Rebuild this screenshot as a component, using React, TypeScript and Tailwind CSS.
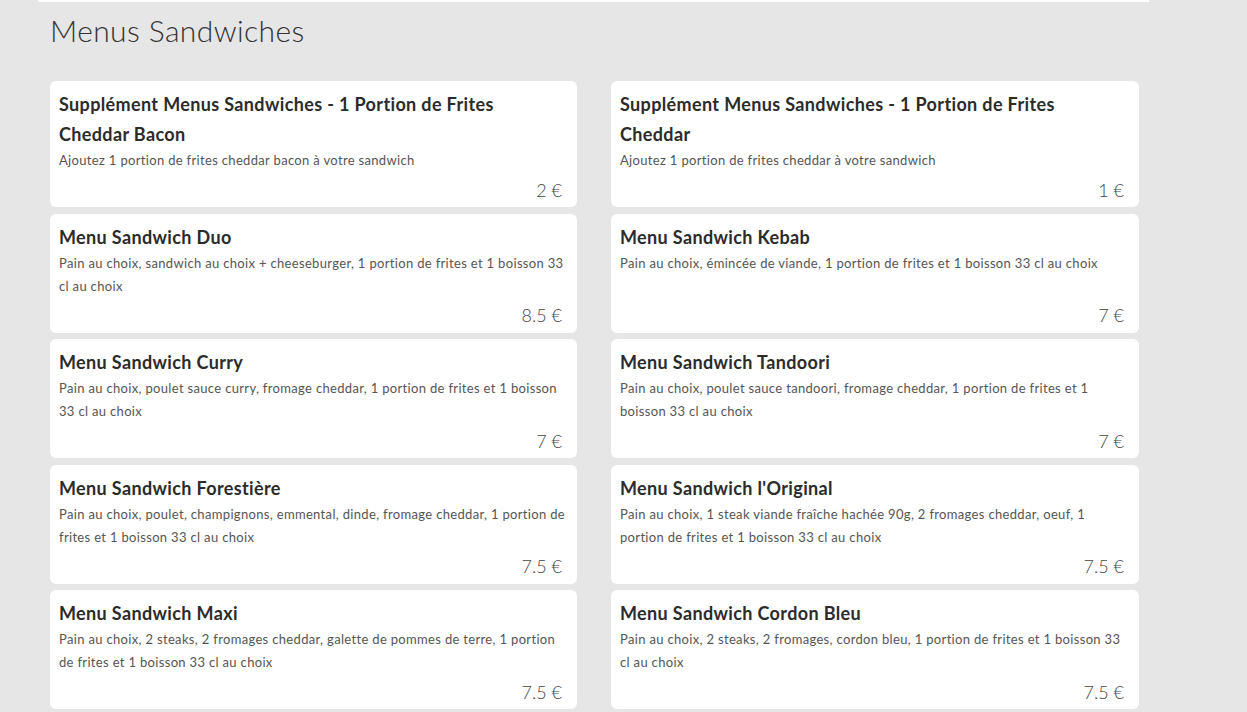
const items = [
  {
    name: "Supplément Menus Sandwiches - 1 Portion de Frites Cheddar Bacon",
    desc: "Ajoutez 1 portion de frites cheddar bacon à votre sandwich",
    price: "2 €",
  },
  {
    name: "Supplément Menus Sandwiches - 1 Portion de Frites Cheddar",
    desc: "Ajoutez 1 portion de frites cheddar à votre sandwich",
    price: "1 €",
  },
  {
    name: "Menu Sandwich Duo",
    desc: "Pain au choix, sandwich au choix + cheeseburger, 1 portion de frites et 1 boisson 33 cl au choix",
    price: "8.5 €",
  },
  {
    name: "Menu Sandwich Kebab",
    desc: "Pain au choix, émincée de viande, 1 portion de frites et 1 boisson 33 cl au choix",
    price: "7 €",
  },
  {
    name: "Menu Sandwich Curry",
    desc: "Pain au choix, poulet sauce curry, fromage cheddar, 1 portion de frites et 1 boisson 33 cl au choix",
    price: "7 €",
  },
  {
    name: "Menu Sandwich Tandoori",
    desc: "Pain au choix, poulet sauce tandoori, fromage cheddar, 1 portion de frites et 1 boisson 33 cl au choix",
    price: "7 €",
  },
  {
    name: "Menu Sandwich Forestière",
    desc: "Pain au choix, poulet, champignons, emmental, dinde, fromage cheddar, 1 portion de frites et 1 boisson 33 cl au choix",
    price: "7.5 €",
  },
  {
    name: "Menu Sandwich l'Original",
    desc: "Pain au choix, 1 steak viande fraîche hachée 90g, 2 fromages cheddar, oeuf, 1 portion de frites et 1 boisson 33 cl au choix",
    price: "7.5 €",
  },
  {
    name: "Menu Sandwich Maxi",
    desc: "Pain au choix, 2 steaks, 2 fromages cheddar, galette de pommes de terre, 1 portion de frites et 1 boisson 33 cl au choix",
    price: "7.5 €",
  },
  {
    name: "Menu Sandwich Cordon Bleu",
    desc: "Pain au choix, 2 steaks, 2 fromages, cordon bleu, 1 portion de frites et 1 boisson 33 cl au choix",
    price: "7.5 €",
  },
];

function MenuCard({ name, desc, price }: { name: string; desc: string; price: string }) {
  return (
    <div className="flex flex-col rounded-[6px] bg-white pl-[9px] pr-[11px] pt-[8px] pb-[2.5px]">
      <h3 className="text-[18px] font-bold leading-[30px] tracking-[0.36px] text-[#2b2b2b]">
        {name}
      </h3>
      <p className="text-[13px] leading-[23px] tracking-[0.33px] text-[#555]">{desc}</p>
      <div className="mt-auto pt-[2.5px] pr-[4px] text-right text-[18px] font-light leading-[30px] text-[#444]">
        {price}
      </div>
    </div>
  );
}

export default function App() {
  return (
    <div
      className="min-h-screen bg-[#e6e6e6]"
      style={{ fontFamily: "Lato, 'Noto Sans', sans-serif" }}
    >
      <div className="ml-[38px] w-[1111px]">
        <div className="h-[2px] bg-white" />
        <div className="pl-[12px] pr-[10px]">
          <h1 className="pt-[9px] text-[30px] font-light leading-[38px] tracking-[0.4px] text-[#333]">
            Menus Sandwiches
          </h1>
          <div className="mt-[32px] grid grid-cols-[527px_528px] gap-x-[34px] gap-y-[6.5px] pb-[20px]">
            {items.map((it) => (
              <MenuCard key={it.name} {...it} />
            ))}
          </div>
        </div>
      </div>
    </div>
  );
}
